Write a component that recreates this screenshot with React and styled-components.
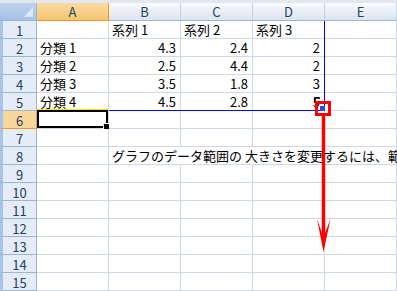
import React from "react";
import styled, { createGlobalStyle, css } from "styled-components";

const GlobalStyle = createGlobalStyle`
  body {
    margin: 0;
    background: #fff;
    font-family: "Noto Sans CJK JP", "Liberation Sans", sans-serif;
  }
`;

const Sheet = styled.div`
  position: relative;
  width: 397px;
  height: 291px;
  overflow: hidden;
  background: #fff;
`;

const TopStrip = styled.div`
  height: 3px;
  background: #e3e8ef;
`;

const Grid = styled.div`
  display: grid;
  grid-template-columns: 37px repeat(5, 72px);
  grid-auto-rows: 18px;
`;

const placed = css`
  grid-row: ${({ $row }) => $row};
  grid-column: ${({ $col }) => $col};
`;

const Corner = styled.div`
  ${placed}
  position: relative;
  background: linear-gradient(#bdd2ee, #a6c1e7);
  border-right: 1px solid #9eb6ce;
  border-bottom: 1px solid #9eb6ce;

  &::after {
    content: "";
    position: absolute;
    right: 3px;
    bottom: 3px;
    border-left: 9px solid transparent;
    border-bottom: 10px solid #dde8f6;
  }
`;

const ColHeader = styled.div`
  ${placed}
  display: flex;
  align-items: center;
  justify-content: center;
  font-size: 13px;
  line-height: 13px;
  color: #27415f;
  background: linear-gradient(#f8fafd, #dbe4f0);
  border-right: 1px solid #c5d3e3;
  border-bottom: 1px solid #9eb6ce;

  ${({ $active }) =>
    $active &&
    css`
      background: linear-gradient(#f9dba4, #f4c56d);
      border-right-color: #f29536;
      border-bottom-color: #f29536;
    `}
`;

const RowHeader = styled.div`
  ${placed}
  display: flex;
  align-items: center;
  justify-content: center;
  padding-top: 2px;
  font-size: 13px;
  line-height: 13px;
  color: #27415f;
  background: #e4ecf7;
  border-left: 3px solid #a9c4e9;
  border-right: 1px solid #9eb6ce;
  border-bottom: 1px solid #9eb6ce;

  ${({ $active }) =>
    $active &&
    css`
      background: #f8d79c;
      border-right-color: #f29536;
      border-bottom-color: #f29536;
    `}
`;

const Cell = styled.div`
  ${placed}
  position: relative;
  display: flex;
  align-items: flex-end;
  justify-content: ${({ $num }) => ($num ? "flex-end" : "flex-start")};
  padding: 0 4px 1px 3px;
  font-size: 13px;
  line-height: 15px;
  color: #000;
  white-space: nowrap;
  border-right: 1px solid ${({ $joined }) => ($joined ? "transparent" : "#d0d7e5")};
  border-bottom: 1px solid #d0d7e5;
  overflow: visible;
  z-index: ${({ $spill }) => ($spill ? 1 : 0)};
`;

const Selection = styled.div`
  position: absolute;
  top: -1px;
  left: 0;
  right: 0;
  bottom: 0;
  border: 2px solid #000;
  z-index: 3;
`;

const FillHandle = styled.div`
  position: absolute;
  right: -4px;
  bottom: -4px;
  width: 5px;
  height: 5px;
  background: #000;
  border: 1px solid #fff;
`;

const RangeOutline = styled.div`
  ${placed}
  position: relative;
  z-index: 2;
  pointer-events: none;
  border-bottom: 1px solid ${({ $color }) => $color};
  border-right: ${({ $side, $color }) => ($side ? `1px solid ${$color}` : "none")};
  margin-bottom: ${({ $lift }) => ($lift ? "1px" : "0")};
`;

const Overlay = styled.svg`
  position: absolute;
  left: 0;
  top: 0;
  pointer-events: none;
  z-index: 5;
`;

const columns = ["A", "B", "C", "D", "E"];

const data = [
  ["", "系列 1", "系列 2", "系列 3", ""],
  ["分類 1", "4.3", "2.4", "2", ""],
  ["分類 2", "2.5", "4.4", "2", ""],
  ["分類 3", "3.5", "1.8", "3", ""],
  ["分類 4", "4.5", "2.8", "5", ""],
];

const note = "グラフのデータ範囲の 大きさを変更するには、範囲の";

const rowCells = (r) => {
  if (r <= 5) return data[r - 1];
  if (r === 8) return ["", note, "", "", ""];
  return ["", "", "", "", ""];
};

const isNum = (v) => /^[0-9.]+$/.test(v);

const rows = Array.from({ length: 15 }, (_, i) => i + 1);

const App = () => (
  <Sheet>
    <GlobalStyle />
    <TopStrip />
    <Grid>
      <Corner $row={1} $col={1} />
      {columns.map((c, ci) => (
        <ColHeader key={c} $row={1} $col={ci + 2} $active={c === "A"}>
          {c}
        </ColHeader>
      ))}
      {rows.map((r) => (
        <React.Fragment key={r}>
          <RowHeader $row={r + 1} $col={1} $active={r === 6}>
            {r}
          </RowHeader>
          {rowCells(r).map((v, ci) => (
            <Cell
              key={ci}
              $row={r + 1}
              $col={ci + 2}
              $num={isNum(v)}
              $spill={r === 8 && ci === 1}
              $joined={r === 8 && ci >= 1 && ci <= 3}
            >
              {v}
              {r === 6 && ci === 0 && (
                <Selection>
                  <FillHandle />
                </Selection>
              )}
            </Cell>
          ))}
        </React.Fragment>
      ))}
      <RangeOutline $col="2 / 3" $row="6 / 7" $color="#f0e600" $lift />
      <RangeOutline $col="3 / 6" $row="2 / 7" $color="#0000ff" $side />
    </Grid>
    <Overlay width="397" height="291" viewBox="0 0 397 291">
      <path d="M315 98h5M315 98v5" stroke="#000" strokeWidth="1.5" fill="none" />
      <rect x="320" y="106" width="5" height="5" fill="#2b4be0" />
      <rect x="316.5" y="102.5" width="13" height="12" fill="none" stroke="#f00" strokeWidth="3" />
      <line x1="323.5" y1="114" x2="323.5" y2="240" stroke="#f00" strokeWidth="3.5" />
      <path d="M317 219 L323.5 252 L330.5 219 L325 233 L322 233 Z" fill="#f00" />
    </Overlay>
  </Sheet>
);

export default App;
